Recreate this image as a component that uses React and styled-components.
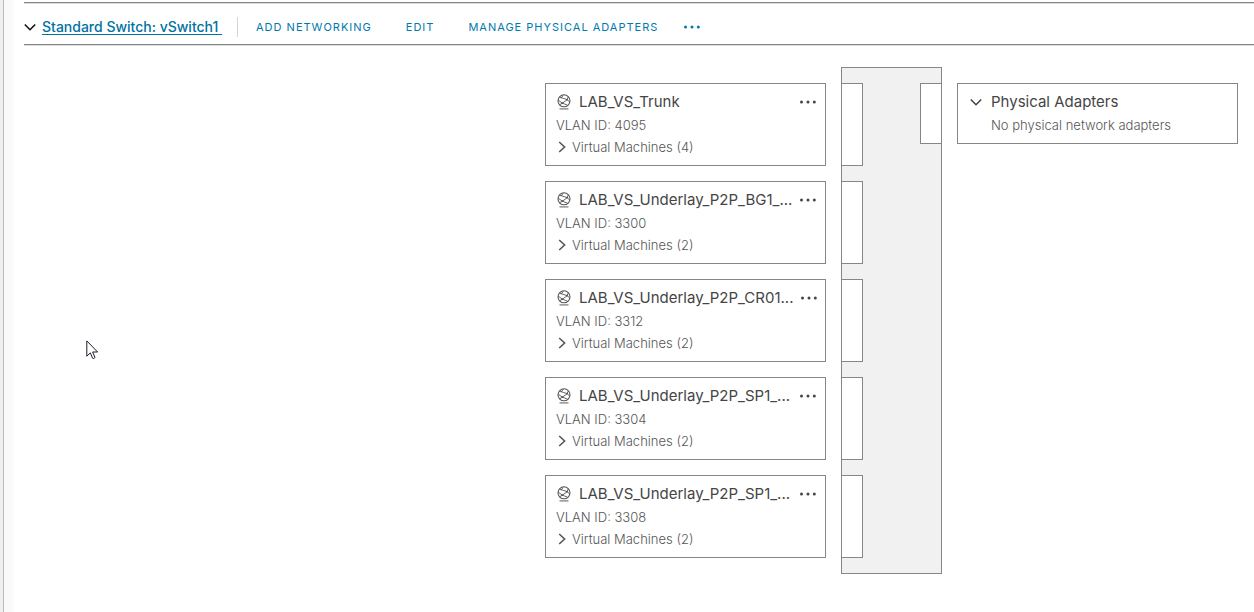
import React from "react";
import styled, { createGlobalStyle } from "styled-components";

const GlobalStyle = createGlobalStyle`
  *, *::before, *::after { box-sizing: border-box; }
  html, body { margin: 0; background: #fff; }
  body, button { font-family: Inter, "Liberation Sans", sans-serif; }
  button { padding: 0; border: 0; background: none; cursor: pointer; }
  svg { display: block; flex: none; }
`;

const Page = styled.div`
  display: flex;
  min-height: 100vh;
  overflow: hidden;
`;

const Gutter = styled.div`
  flex: none;
  width: 4px;
  background: #f0f0f0;
  border-right: 1px solid #bdbdbd;
`;

const Content = styled.main`
  flex: 1;
  min-width: 0;
  padding: 2px 0 38px 20px;
  background: linear-gradient(to right, #fafafa 9px, #fff 10px);
`;

const SwitchBar = styled.header`
  display: flex;
  align-items: center;
  height: 43px;
  padding-top: 6px;
  border-top: 1px solid #868686;
  border-bottom: 1px solid #868686;
  box-shadow: inset 0 1px 0 #dcdcdc, 0 1px 0 #dcdcdc;
`;

const IconButton = styled.button`
  display: flex;
  align-items: center;
  justify-content: center;
  width: 12px;
  height: 20px;
  color: ${(p) => p.$color || "#454545"};
`;

const SwitchLink = styled.a`
  margin: 0 15px 0 6px;
  color: #0072a3;
  font-size: 14px;
  font-weight: 500;
  line-height: 20px;
  white-space: pre;
  text-decoration: underline;
  text-underline-offset: 2px;
`;

const Actions = styled.nav`
  display: flex;
  align-items: center;
  gap: 34px;
  height: 20px;
  padding-left: 18px;
  border-left: 1px solid #d4d4d4;
`;

const Action = styled.button`
  color: #0079ad;
  font-size: 11px;
  line-height: 20px;
  letter-spacing: 1px;
  text-transform: uppercase;
  white-space: nowrap;
`;

const More = styled(IconButton)`
  width: 18px;
  margin-left: ${(p) => p.$gap || "0"};
`;

const Diagram = styled.section`
  display: flex;
  justify-content: flex-end;
  align-items: flex-start;
  gap: 15px;
  padding: 22px 16px 0 0;
`;

const CardColumn = styled.div`
  display: flex;
  flex-direction: column;
  gap: 15px;
  width: 281px;
  padding-top: 16px;
`;

const Card = styled.article`
  padding: 6px 8px 7px 10px;
  border: 1px solid #868686;
  background: #fff;
  color: #565656;
`;

const CardHead = styled.div`
  display: flex;
  align-items: center;
  gap: ${(p) => p.$gap || "7px"};
  height: 24px;
  padding-left: ${(p) => p.$inset || "0"};
`;

const CardTitle = styled.h2`
  flex: 1;
  margin: 0;
  color: #454545;
  font-size: 15px;
  font-weight: 400;
  line-height: 24px;
  white-space: nowrap;
`;

const CardLine = styled.div`
  padding-left: ${(p) => p.$inset || "0"};
  font-size: 13px;
  font-weight: 300;
  line-height: 22px;
  white-space: nowrap;
`;

const Expander = styled.button`
  display: flex;
  align-items: center;
  gap: 4px;
  color: inherit;
  font-size: 13px;
  font-weight: 300;
  line-height: 22px;
  white-space: nowrap;
`;

const Backplane = styled.div`
  display: flex;
  justify-content: space-between;
  align-items: flex-start;
  width: 101px;
  padding: 15px 0;
  border: 1px solid #868686;
  background: #f1f1f1;
`;

const Ports = styled.div`
  display: flex;
  flex-direction: column;
  gap: 15px;
`;

const Port = styled.div`
  width: 21px;
  height: ${(p) => (p.$side === "right" ? "61px" : "83px")};
  border: 1px solid #868686;
  border-left-width: ${(p) => (p.$side === "right" ? "1px" : "0")};
  border-right-width: ${(p) => (p.$side === "right" ? "0" : "1px")};
  background: #fff;
`;

const Pointer = styled.svg`
  position: absolute;
  left: 86px;
  top: 340px;
  pointer-events: none;
`;

const Chevron = ({ right }) => (
  <svg width="12" height="12" viewBox="0 0 12 12" fill="none" stroke="currentColor" strokeWidth="1.6" aria-hidden="true">
    <path d={right ? "M3.2 1 8.6 6 3.2 11" : "M.8 3.5 6 8.7l5.2-5.2"} />
  </svg>
);

const Dots = () => (
  <svg width="18" height="4" viewBox="0 0 18 4" fill="currentColor" aria-hidden="true">
    <circle cx="2.5" cy="2" r="1.5" />
    <circle cx="9" cy="2" r="1.5" />
    <circle cx="15.3" cy="2" r="1.5" />
  </svg>
);

const NetworkIcon = () => (
  <svg width="16" height="16" viewBox="0 0 16 16" fill="none" stroke="#565656" aria-hidden="true">
    <circle cx="8" cy="6.8" r="6" strokeWidth="1.1" />
    <path d="M2.2 6.2 6.4 9.200l4.800-3.500L13.700 8M3.800 3.200 11 5.600 12.300 3M6.400 9.200 3.600 10.800M6.400 9.200l5.200 2M5 4.200l2.400-3" strokeWidth=".9" />
    <circle cx="6.4" cy="9.200" r=".9" fill="#565656" stroke="none" />
    <circle cx="11" cy="5.700" r=".9" fill="#565656" stroke="none" />
    <path d="M3.500 14.900h9" stroke="#777" strokeWidth="1.200" />
  </svg>
);

const portGroups = [
  { name: "LAB_VS_Trunk", vlan: 4095, machines: 4 },
  { name: "LAB_VS_Underlay_P2P_BG1_...", vlan: 3300, machines: 2 },
  { name: "LAB_VS_Underlay_P2P_CR01...", vlan: 3312, machines: 2 },
  { name: "LAB_VS_Underlay_P2P_SP1_...", vlan: 3304, machines: 2 },
  { name: "LAB_VS_Underlay_P2P_SP1_...", vlan: 3308, machines: 2 },
];

const PortGroup = ({ group }) => (
  <Card>
    <CardHead>
      <NetworkIcon />
      <CardTitle>{group.name}</CardTitle>
      <More aria-label="Port group actions">
        <Dots />
      </More>
    </CardHead>
    <CardLine>VLAN ID: {group.vlan}</CardLine>
    <Expander>
      <Chevron right />
      Virtual Machines ({group.machines})
    </Expander>
  </Card>
);

export default function App() {
  return (
    <>
      <GlobalStyle />
      <Page>
        <Gutter />
        <Content>
          <SwitchBar>
            <IconButton $color="#111" aria-label="Collapse switch">
              <Chevron />
            </IconButton>
            <SwitchLink href="#vswitch1">{"Standard Switch: vSwitch1 "}</SwitchLink>
            <Actions>
              <Action>Add Networking</Action>
              <Action>Edit</Action>
              <Action>Manage Physical Adapters</Action>
            </Actions>
            <More $color="#0079ad" $gap="25px" aria-label="More actions">
              <Dots />
            </More>
          </SwitchBar>
          <Diagram>
            <CardColumn>
              {portGroups.map((group) => (
                <PortGroup key={group.vlan} group={group} />
              ))}
            </CardColumn>
            <Backplane>
              <Ports>
                {portGroups.map((group) => (
                  <Port key={group.vlan} />
                ))}
              </Ports>
              <Port $side="right" />
            </Backplane>
            <CardColumn>
              <Card>
                <CardHead $gap="9px" $inset="2px">
                  <IconButton aria-label="Collapse physical adapters">
                    <Chevron />
                  </IconButton>
                  <CardTitle>Physical Adapters</CardTitle>
                </CardHead>
                <CardLine $inset="23px">No physical network adapters</CardLine>
              </Card>
            </CardColumn>
          </Diagram>
        </Content>
      </Page>
      <Pointer width="13" height="20" viewBox="0 0 13 20" fill="#fff" stroke="#1c1c28" strokeWidth="1" aria-hidden="true">
        <path d="M.8.9v15.3l3.5-3.3 2.4 5.4c.3.7 2.6-.2 2.2-1.1L6.6 12h5Z" />
      </Pointer>
    </>
  );
}
